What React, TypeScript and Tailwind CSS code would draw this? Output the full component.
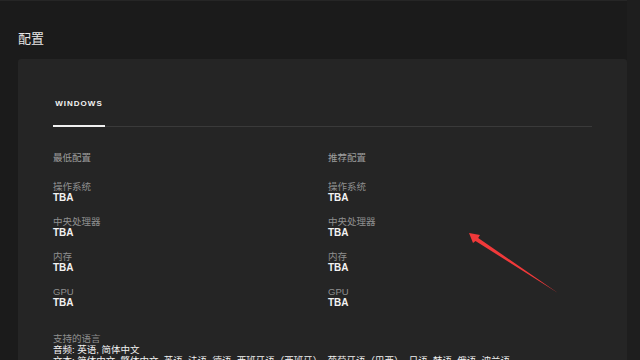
import React from "react";

const font = "font-['Liberation_Sans','Noto_Sans_CJK_SC',sans-serif]";

const specs = [
  { label: "操作系统", value: "TBA" },
  { label: "中央处理器", value: "TBA" },
  { label: "内存", value: "TBA" },
  { label: "GPU", value: "TBA" },
];

function SpecColumn({ title }: { title: string }) {
  return (
    <div className="flex flex-col">
      <div className="text-[9.5px] leading-[11px] text-[#9d9d9d]">{title}</div>
      <div className="mt-[18px] flex flex-col gap-[13px]">
        {specs.map((s) => (
          <div key={s.label} className="flex flex-col">
            <span className="text-[9.5px] leading-[11px] text-[#8f8f8f]">{s.label}</span>
            <span className="text-[10px] leading-[11px] font-bold text-[#f2f2f2]">{s.value}</span>
          </div>
        ))}
      </div>
    </div>
  );
}

export default function App() {
  return (
    <div className={`relative min-h-screen bg-[#1b1b1b] flex overflow-hidden ${font}`}>
      <div className="flex-1 border-t border-[#262626] pl-[18px] pt-[29px]">
        <h2 className="text-[13px] leading-[18px] text-[#e6e6e6] mb-[11px]">配置</h2>

        <div className="bg-[#252525] rounded-[3px] px-[35px] pt-[39px] pb-6">
          <div className="flex border-b border-[#3a3a3a]">
            <div className="w-[52px] -mb-px pb-[16px] border-b-2 border-[#f0f0f0] text-center text-[8px] leading-[11px] font-bold tracking-[1px] text-[#f2f2f2]">
              WINDOWS
            </div>
          </div>

          <div className="mt-[25px] grid grid-cols-2 gap-x-[11px]">
            <SpecColumn title="最低配置" />
            <SpecColumn title="推荐配置" />
          </div>

          <div className="mt-[25px] flex flex-col text-[9.5px] leading-[11px]">
            <span className="text-[#8f8f8f]">支持的语言</span>
            <span className="text-[#f2f2f2]">音频: 英语, 简体中文</span>
            <span className="text-[#f2f2f2]">
              文本: 简体中文, 繁体中文, 英语, 法语, 德语, 西班牙语（西班牙）, 葡萄牙语（巴西）, 日语, 韩语, 俄语, 波兰语
            </span>
          </div>
        </div>
      </div>
      <div className="w-[13px] bg-[#1e1e1e]" />

      <svg className="absolute left-0 top-0 pointer-events-none" width="640" height="360" viewBox="0 0 640 360">
        <polygon
          points="469,233 480,235 478.2,238 558,293 475.5,241 473,243"
          fill="#f0393a"
        />
      </svg>
    </div>
  );
}
